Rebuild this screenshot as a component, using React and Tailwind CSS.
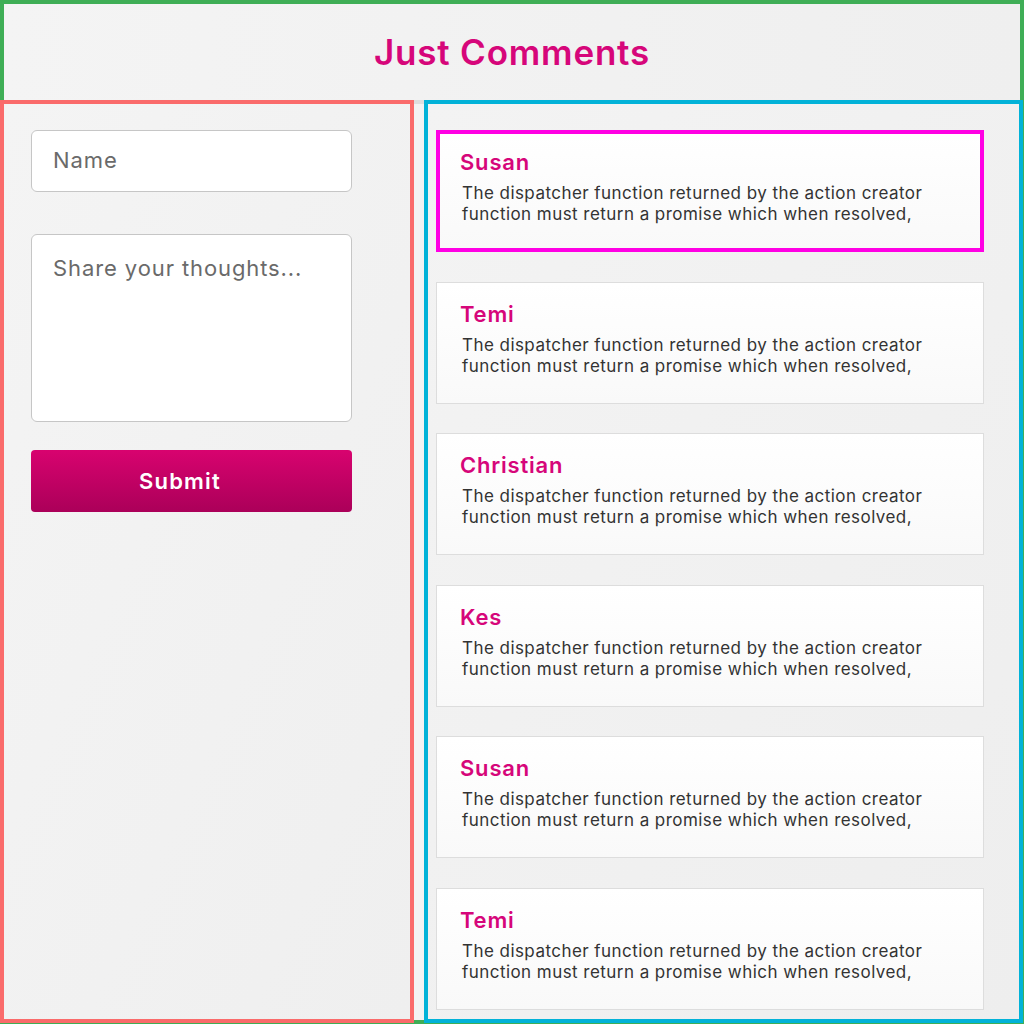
import { useState } from "react";

const comments = [
  { id: 1, name: "Susan", active: true },
  { id: 2, name: "Temi" },
  { id: 3, name: "Christian" },
  { id: 4, name: "Kes" },
  { id: 5, name: "Susan" },
  { id: 6, name: "Temi" },
];

const text1 = "The dispatcher function returned by the action creator";
const text2 = "function must return a promise which when resolved,";

export default function App() {
  const [name, setName] = useState("");
  const [thoughts, setThoughts] = useState("");

  return (
    <div
      className="w-[1024px] h-[1024px] border-4 border-[#3fae56] bg-[#f3f3f3] flex flex-col"
      style={{ fontFamily: "Inter, 'Noto Sans', sans-serif" }}
    >
      {/* Header */}
      <header className="h-[100px] shrink-0 border-b-4 border-[#dedede] bg-linear-to-r from-[#f4f4f4] to-[#efefef] flex items-center justify-center">
        <h1 className="text-[35px] font-semibold tracking-[0.8px] text-[#d6067a]">
          Just Comments
        </h1>
      </header>

      <div className="flex shrink-0 -mt-1 -ml-1 -mr-[3px] h-[923px] gap-[10px]">
        {/* Form panel */}
        <section className="w-[414px] shrink-0 border-4 border-[#fa6b6b] bg-linear-to-br from-[#f4f4f4] to-[#efefef] pt-[26px] pl-[27px]">
          <input
            value={name}
            onChange={(e) => setName(e.target.value)}
            placeholder="Name"
            className="block w-[321px] h-[62px] bg-white border border-[#c6c6c6] rounded-[6px] px-[21px] pb-[3px] text-[22px] tracking-[0.9px] text-[#333] placeholder:text-[#6a6a6a] outline-none"
          />
          <textarea
            value={thoughts}
            onChange={(e) => setThoughts(e.target.value)}
            placeholder="Share your thoughts..."
            className="block mt-[42px] w-[321px] h-[188px] bg-white border border-[#c6c6c6] rounded-[6px] px-[21px] pt-[19px] text-[22px] leading-[28px] tracking-[0.9px] text-[#333] placeholder:text-[#6a6a6a] outline-none resize-none"
          />
          <button className="mt-[28px] w-[321px] h-[62px] rounded-[4px] bg-linear-to-b from-[#d8036f] to-[#ab0059] text-white text-[22px] font-semibold tracking-[1.2px] pr-[23px]">
            Submit
          </button>
        </section>

        {/* Comments panel */}
        <section className="flex-1 border-4 border-[#02b2d8] bg-linear-to-br from-[#f3f3f3] to-[#eeeeee] pt-[26px] pl-[8px]">
          <div className="flex flex-col gap-[29.6px]">
            {comments.map((c) => (
              <div
                key={c.id}
                className={`w-[548px] h-[122px] shrink-0 bg-linear-to-b from-white to-[#f9f9f9] ${
                  c.active
                    ? "border-4 border-[#ff00e4] pl-[20px] pt-[15px]"
                    : "border border-[#dddddd] pl-[23px] pt-[18px]"
                }`}
              >
                <h2 className="text-[22px] leading-[26px] font-semibold tracking-[0.8px] text-[#d6067a]">
                  {c.name}
                </h2>
                <p className="mt-[8px] pl-[2px] text-[17px] leading-[21px] tracking-[0.45px] text-[#333]">
                  {text1}
                  <br />
                  {text2}
                </p>
              </div>
            ))}
          </div>
        </section>
      </div>
    </div>
  );
}
